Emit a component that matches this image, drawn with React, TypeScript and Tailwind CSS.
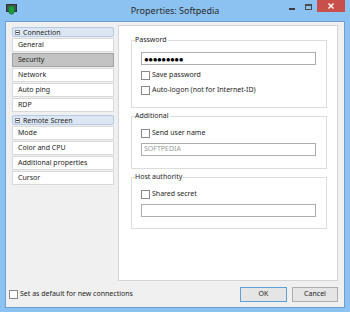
import React from 'react';

const connectionItems = ['General', 'Security', 'Network', 'Auto ping', 'RDP'];
const screenItems = ['Mode', 'Color and CPU', 'Additional properties', 'Cursor'];

const AppIcon: React.FC = () => (
    <svg width="11" height="11" viewBox="0 0 11 11">
        <rect x="0.5" y="0.5" width="10" height="7" fill="#4b4f52" stroke="#2e3133" />
        <rect x="3" y="8" width="5" height="1.5" fill="#3a3d40" />
        <path d="M5.5 2 L8.5 3 L8.5 6 Q8.5 9 5.5 10.5 Q2.5 9 2.5 6 L2.5 3 Z" fill="#1d9e3c" stroke="#0f6d26" strokeWidth="0.6" />
    </svg>
);

const TitleBar: React.FC = () => (
    <div className="h-[21px] grid grid-cols-[1fr_auto_1fr] shrink-0">
        <div className="pl-[6px] pt-[4px]">
            <AppIcon />
        </div>
        <div className="text-[9px] leading-[21px] text-[#2b2b2b]">Properties: Softpedia</div>
        <div className="flex justify-end items-start pr-[5px]">
            <div className="w-[17px] h-[12px] flex justify-center items-end pb-[2px]">
                <div className="w-[6px] h-[2px] bg-[#3a3a3a]" />
            </div>
            <div className="w-[17px] h-[12px] flex justify-center items-center pt-[1px]">
                <div className="w-[7px] h-[6px] border border-[#4a4a4a] border-t-2" />
            </div>
            <div className="w-[28px] h-[12px] bg-[#c9504a] flex items-center justify-center">
                <svg width="6" height="6" viewBox="0 0 6 6">
                    <path d="M0.5 0.5 L5.5 5.5 M5.5 0.5 L0.5 5.5" stroke="#ffffff" strokeWidth="1.4" />
                </svg>
            </div>
        </div>
    </div>
);

const CheckBox: React.FC<{ label: string }> = ({ label }) => (
    <div className="flex items-center gap-[2px] h-[11px]">
        <span className="w-[9px] h-[9px] border border-[#8a8a8a] bg-white shrink-0" />
        <span className="whitespace-nowrap">{label}</span>
    </div>
);

const ListHeader: React.FC<{ title: string }> = ({ title }) => (
    <div className="h-[10px] flex items-center gap-[3px] pl-[2px] border border-[#b4c9e4] bg-[#dde7f4] rounded-[2px]">
        <span className="w-[5px] h-[5px] border border-[#7d8ea6] bg-white flex items-center justify-center">
            <span className="w-[3px] h-px bg-[#3c3c3c]" />
        </span>
        <span className="leading-none">{title}</span>
    </div>
);

const ListItem: React.FC<{ label: string; selected?: boolean }> = ({ label, selected }) => (
    <div
        className={`h-[14px] mt-[1px] pl-[5px] flex items-center border ${selected ? 'bg-[#c3c3c3] border-[#a3a3a3]' : 'bg-white border-[#d9d9d9]'}`}
    >
        {label}
    </div>
);

const TextBox: React.FC<{ value?: string; dots?: boolean }> = ({ value, dots }) => (
    <div className="w-[175px] h-[13px] border border-[#abadb3] bg-white pl-[2px] flex items-center">
        {dots && <span className="text-[8px] leading-none tracking-[-0.5px] text-black">●●●●●●●●●</span>}
        {value && <span className="text-[#9a9a9a]">{value}</span>}
    </div>
);

const GroupBox: React.FC<{ title: string; className?: string; children: React.ReactNode }> = ({ title, className, children }) => (
    <fieldset className={`ml-[12px] w-[196px] border border-[#dcdcdc] pl-[9px] ${className ?? ''}`}>
        <legend className="leading-[10px] pr-[1px] ml-[-6px]">{title}</legend>
        {children}
    </fieldset>
);

const App: React.FC = () => {
    return (
        <div className="w-[350px] h-[312px] bg-[#8cc2f1] flex flex-col text-[7px] text-[#1e1e1e] font-['Noto_Sans',sans-serif] overflow-hidden">
            <TitleBar />
            <div className="flex-1 mx-[5px] mb-[4px] border border-[#6b9fd2] bg-[#f0f0f0] flex flex-col">
                <div className="flex pt-[3px]">
                    <div className="w-[112px] pl-[6px] pt-[2px]">
                        <div className="w-[102px]">
                            <ListHeader title="Connection" />
                            {connectionItems.map(item => (
                                <ListItem key={item} label={item} selected={item === 'Security'} />
                            ))}
                            <div className="mt-[3px]">
                                <ListHeader title="Remote Screen" />
                            </div>
                            {screenItems.map(item => (
                                <ListItem key={item} label={item} />
                            ))}
                        </div>
                    </div>
                    <div className="w-[220px] h-[256px] bg-white border border-[#d5d5d5] pt-[9px]">
                        <GroupBox title="Password" className="pb-[11px]">
                            <div className="mt-[7px]">
                                <TextBox dots />
                            </div>
                            <div className="mt-[5px]">
                                <CheckBox label="Save password" />
                            </div>
                            <div className="mt-[4px]">
                                <CheckBox label="Auto-logon (not for Internet-ID)" />
                            </div>
                        </GroupBox>
                        <GroupBox title="Additional" className="mt-[3px] pb-[12px]">
                            <div className="mt-[7px]">
                                <CheckBox label="Send user name" />
                            </div>
                            <div className="mt-[4px]">
                                <TextBox value="SOFTPEDIA" />
                            </div>
                        </GroupBox>
                        <GroupBox title="Host authority" className="mt-[3px] pb-[11px]">
                            <div className="mt-[7px]">
                                <CheckBox label="Shared secret" />
                            </div>
                            <div className="mt-[4px]">
                                <TextBox />
                            </div>
                        </GroupBox>
                    </div>
                </div>
                <div className="flex items-center mt-[6px] pl-[3px] pr-[6px]">
                    <div className="flex-1">
                        <CheckBox label="Set as default for new connections" />
                    </div>
                    <div className="flex gap-[5px]">
                        <button className="w-[47px] h-[15px] bg-[#e5e5e5] border border-[#5d9fd6] flex items-center justify-center">OK</button>
                        <button className="w-[46px] h-[15px] bg-[#e5e5e5] border border-[#adadad] flex items-center justify-center">Cancel</button>
                    </div>
                </div>
            </div>
        </div>
    );
};

export default App;
